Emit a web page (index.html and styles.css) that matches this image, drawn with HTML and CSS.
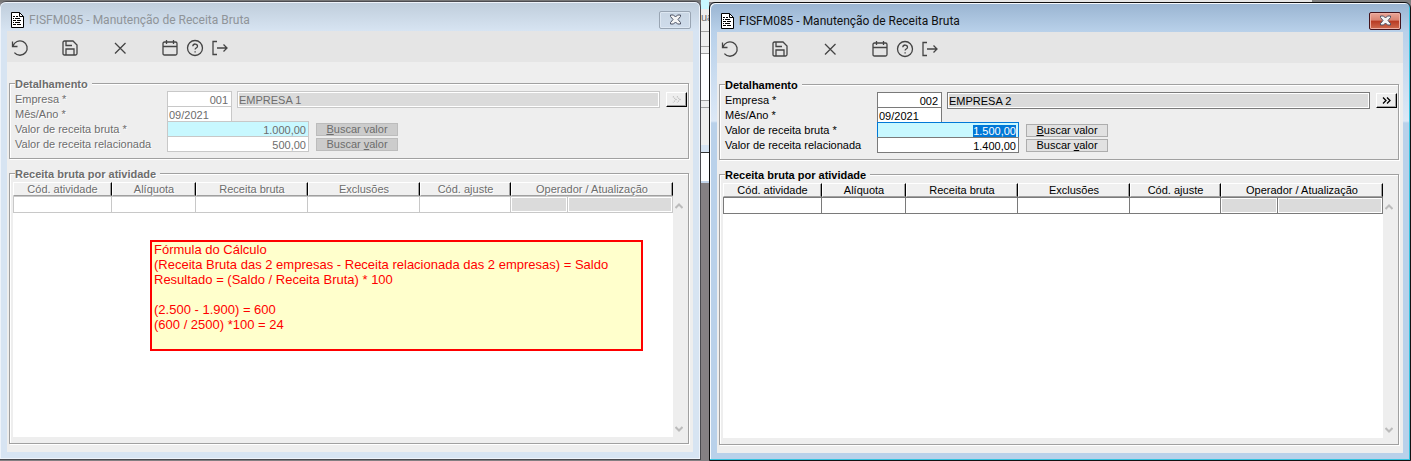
FILE: index.html
```html
<!DOCTYPE html>
<html lang="pt-BR">
<head>
  <meta charset="UTF-8" />
  <meta name="viewport" content="width=device-width, initial-scale=1.0"/>
  <title>FISFM085 - Manutenção de Receita Bruta</title>
  <link rel="stylesheet" href="styles.css">
</head>
<body>

  <svg class="sprite" aria-hidden="true">
    <symbol id="doc" viewBox="0 0 13 16">
      <path d="M0.5 0.5h8l4 4v11h-12z" fill="#fff" stroke="#000"/>
      <path d="M8.5 0.5v4h4" fill="none" stroke="#000"/>
      <path d="M2 4.5h2M5 4.5h2M2 6.5h1M4 6.5h5M2 8.5h3M6 8.5h4M2 10.5h1M4 10.5h5M2 12.5h3M6 12.5h4" stroke="#000"/>
    </symbol>
    <symbol id="undo" viewBox="0 0 18 18">
      <path d="M1.5 2.5v5h5M2 7.2A7.2 7.2 0 1 1 3.4 13.6"/>
    </symbol>
    <symbol id="save" viewBox="0 0 18 18">
      <path d="M3.500 2h8.500l4 4v8.500q0 1.500-1.500 1.500h-11q-1.500 0-1.500-1.500v-11q0-1.500 1.500-1.500zM5 2v4.500h6M5 16v-6h8v6"/>
    </symbol>
    <symbol id="cancel" viewBox="0 0 18 18">
      <path d="M4 4l10.500 10.500M14.500 4l-10.500 10.500"/>
    </symbol>
    <symbol id="calendar" viewBox="0 0 18 18">
      <path d="M3.500 3h11q1.500 0 1.500 1.500v10q0 1.500-1.500 1.500h-11q-1.500 0-1.500-1.500v-10q0-1.500 1.500-1.500zM2 7.500h14M5.500 1v4M12.500 1v4"/>
    </symbol>
    <symbol id="help" viewBox="0 0 18 18">
      <circle cx="9" cy="9" r="7.500"/>
      <path d="M6.800 7.200c.3-3 4.700-2.800 4.700 0 0 1.800-2.400 1.900-2.400 3.300M9.100 12.200v1.200"/>
    </symbol>
    <symbol id="exit" viewBox="0 0 18 18">
      <path d="M6 2.500h-4v13h4M6 9h10M12.500 5.500l3.500 3.500-3.500 3.500"/>
    </symbol>
    <symbol id="close" viewBox="0 0 13 11">
      <path d="M1.500 1h3l2 2 2-2h3v1.500l-2.500 3 2.500 3v1.500h-3l-2-2-2 2h-3v-1.500l2.500-3-2.500-3z" fill="#f4f4f4" stroke="#4c5265"/>
    </symbol>
    <symbol id="more" viewBox="0 0 9 7">
      <path d="M1 0.500l3 3-3 3M5 0.500l3 3-3 3"/>
    </symbol>
    <symbol id="chevron" viewBox="0 0 8 6">
      <path d="M0.500 5l3.500-3.500 3.500 3.500"/>
    </symbol>
  </svg>

  <main class="desktop">

    <section class="window inactive">
      <header class="titlebar">
        <svg class="doc-icon"><use href="#doc"/></svg>
        <h1>FISFM085 - Manutenção de Receita Bruta</h1>
        <button class="close" type="button" aria-label="Fechar"><svg><use href="#close"/></svg></button>
      </header>
      <div class="client">
        <nav class="toolbar">
          <button type="button" aria-label="Desfazer"><svg><use href="#undo"/></svg></button>
          <button class="apart" type="button" aria-label="Salvar"><svg><use href="#save"/></svg></button>
          <button class="apart" type="button" aria-label="Cancelar"><svg><use href="#cancel"/></svg></button>
          <button class="apart" type="button" aria-label="Calendário"><svg><use href="#calendar"/></svg></button>
          <button type="button" aria-label="Ajuda"><svg><use href="#help"/></svg></button>
          <button type="button" aria-label="Sair"><svg><use href="#exit"/></svg></button>
        </nav>
        <form class="content">
          <div class="group">
            <h2>Detalhamento</h2>
            <div class="row">
              <label for="empresa1">Empresa *</label>
              <input class="short number" id="empresa1" value="001">
              <input class="name" aria-label="Nome da empresa" value="EMPRESA 1" readonly>
              <button class="more" type="button" aria-label="Mais"><svg><use href="#more"/></svg></button>
            </div>
            <div class="row">
              <label for="mes1">Mês/Ano *</label>
              <input class="short" id="mes1" value="09/2021">
            </div>
            <div class="row">
              <label for="bruta1">Valor de receita bruta *</label>
              <input class="long number key" id="bruta1" value="1.000,00">
              <button class="fetch" type="button"><u>B</u>uscar valor</button>
            </div>
            <div class="row">
              <label for="rel1">Valor de receita relacionada</label>
              <input class="long number" id="rel1" value="500,00">
              <button class="fetch" type="button">Buscar <u>v</u>alor</button>
            </div>
          </div>
          <div class="group activities">
            <h2>Receita bruta por atividade</h2>
            <div class="list">
              <div class="sheet">
                <table>
                  <colgroup>
                    <col class="c-code"><col class="c-rate"><col class="c-value"><col class="c-value"><col class="c-adjust"><col class="c-user"><col>
                  </colgroup>
                  <thead>
                    <tr><th>Cód. atividade</th><th>Alíquota</th><th>Receita bruta</th><th>Exclusões</th><th>Cód. ajuste</th><th colspan="2">Operador / Atualização</th></tr>
                  </thead>
                  <tbody>
                    <tr><td></td><td></td><td></td><td></td><td></td><td class="locked"></td><td class="locked"></td></tr>
                  </tbody>
                </table>
              </div>
              <div class="scroll">
                <svg><use href="#chevron"/></svg>
                <svg class="down"><use href="#chevron"/></svg>
              </div>
            </div>
            <div class="note">
              <p>Fórmula do Cálculo</p>
              <p>(Receita Bruta das 2 empresas - Receita relacionada das 2 empresas) = Saldo</p>
              <p>Resultado = (Saldo / Receita Bruta) * 100</p>
              <br>
              <p>(2.500 - 1.900) = 600</p>
              <p>(600 / 2500) *100 = 24</p>
            </div>
          </div>
        </form>
      </div>
    </section>

    <div class="behind">
      <div class="b-key"></div>
      <div class="b-text">ua</div>
      <div class="b-row"></div>
      <div class="b-gap"></div>
      <div class="b-sheet"></div>
      <div class="b-gap"></div>
      <div class="b-foot"></div>
      <div class="b-frame"></div>
      <div class="b-last"></div>
    </div>

    <section class="window active">
      <header class="titlebar">
        <svg class="doc-icon"><use href="#doc"/></svg>
        <h1>FISFM085 - Manutenção de Receita Bruta</h1>
        <button class="close" type="button" aria-label="Fechar"><svg><use href="#close"/></svg></button>
      </header>
      <div class="client">
        <nav class="toolbar">
          <button type="button" aria-label="Desfazer"><svg><use href="#undo"/></svg></button>
          <button class="apart" type="button" aria-label="Salvar"><svg><use href="#save"/></svg></button>
          <button class="apart" type="button" aria-label="Cancelar"><svg><use href="#cancel"/></svg></button>
          <button class="apart" type="button" aria-label="Calendário"><svg><use href="#calendar"/></svg></button>
          <button type="button" aria-label="Ajuda"><svg><use href="#help"/></svg></button>
          <button type="button" aria-label="Sair"><svg><use href="#exit"/></svg></button>
        </nav>
        <form class="content">
          <div class="group">
            <h2>Detalhamento</h2>
            <div class="row">
              <label for="empresa2">Empresa *</label>
              <input class="short number" id="empresa2" value="002">
              <input class="name" aria-label="Nome da empresa" value="EMPRESA 2" readonly>
              <button class="more" type="button" aria-label="Mais"><svg><use href="#more"/></svg></button>
            </div>
            <div class="row">
              <label for="mes2">Mês/Ano *</label>
              <input class="short" id="mes2" value="09/2021">
            </div>
            <div class="row">
              <label for="bruta2">Valor de receita bruta *</label>
              <input class="long number key" id="bruta2" value="1.500,00">
              <button class="fetch" type="button"><u>B</u>uscar valor</button>
            </div>
            <div class="row">
              <label for="rel2">Valor de receita relacionada</label>
              <input class="long number" id="rel2" value="1.400,00">
              <button class="fetch" type="button">Buscar <u>v</u>alor</button>
            </div>
          </div>
          <div class="group activities">
            <h2>Receita bruta por atividade</h2>
            <div class="list">
              <div class="sheet">
                <table>
                  <colgroup>
                    <col class="c-code"><col class="c-rate"><col class="c-value"><col class="c-value"><col class="c-adjust"><col class="c-user"><col>
                  </colgroup>
                  <thead>
                    <tr><th>Cód. atividade</th><th>Alíquota</th><th>Receita bruta</th><th>Exclusões</th><th>Cód. ajuste</th><th colspan="2">Operador / Atualização</th></tr>
                  </thead>
                  <tbody>
                    <tr><td></td><td></td><td></td><td></td><td></td><td class="locked"></td><td class="locked"></td></tr>
                  </tbody>
                </table>
              </div>
              <div class="scroll">
                <svg><use href="#chevron"/></svg>
                <svg class="down"><use href="#chevron"/></svg>
              </div>
            </div>
          </div>
        </form>
      </div>
    </section>

  </main>

  <script>
    const field = document.getElementById('bruta2');
    field.focus();
    field.select();
  </script>

</body>
</html>
```
FILE: styles.css
```css
* { box-sizing: border-box; margin: 0; padding: 0; }
body, input, button {
  font-family: "Liberation Sans", Arial, sans-serif;
  font-size: 11px;
}
.sprite { position: absolute; width: 0; height: 0; }
.desktop {
  display: grid;
  grid-template-columns: minmax(0, 701fr) 8px minmax(0, 702fr);
  min-height: 100vh;
  background:
    linear-gradient(90deg, #777 50%, #e6e6e6 0 93%, #808080 0) top / 100% 2px no-repeat,
    #848083;
}

/* windows */
.window {
  --frame: #d7e4f2;
  --bar: linear-gradient(#bfcddb, #d7e4f2);
  --text: #6d6d6d;
  --line: #c8c8c8;
  --fetch: #ccc;
  --fetch-line: #bcbcbc;
  display: flex;
  flex-direction: column;
  padding: 0 7px 7px;
  background: var(--bar) top / 100% 29px no-repeat, var(--frame);
  border: 1px solid #4b4b50;
  border-radius: 6px 6px 0 0;
  box-shadow: inset 0 0 0 1px #eef3fa;
  color: var(--text);
}
.inactive {
  margin: 1px 0;
  border-left: 0;
  text-shadow: 1px 1px 0 #fff;
}
.active {
  --frame: #b9d1ea;
  --bar: linear-gradient(#99b4d1, #b9d1ea);
  --text: #000;
  --line: #7a7a7a;
  --fetch: #e1e1e1;
  --fetch-line: #adadad;
  margin-top: 2px;
  background:
    var(--bar) top / 100% 29px no-repeat,
    linear-gradient(#b9d1ea 30px, #dce8f6 118px, #b9d1ea 120px);
  border-color: #111;
  box-shadow: inset -1px -1px 0 #35c3df, inset 1px 1px 0 #f5f9fd;
}
.titlebar {
  display: flex;
  align-items: center;
  height: 29px;
  padding: 6px 2px 0 4px;
}
.titlebar h1 {
  flex: 1;
  margin-left: 5px;
  font: 12px/16px Roboto, "Noto Sans", sans-serif;
  color: #111;
  text-shadow: none;
}
.inactive .titlebar h1 { color: #8f9499; }
.doc-icon { width: 13px; height: 16px; }
.close {
  display: grid;
  place-items: center;
  width: 32px;
  height: 18px;
  border: 1px solid #99a5b3;
  border-radius: 2px;
  background: linear-gradient(#c9d6e4, #cfdceb);
  box-shadow: inset 0 0 0 1px #dde7f2;
}
.close svg { width: 13px; height: 11px; }
.active .close {
  border-color: #43141c;
  background: linear-gradient(#e9a698, #d98472 45%, #b83a22 50%, #cf6c50);
  box-shadow: inset 0 0 0 1px #eeb0a4;
}
.client {
  flex: 1;
  display: flex;
  flex-direction: column;
  background: #eee;
}
.toolbar {
  display: flex;
  height: 31px;
  padding-top: 3px;
  background: #e5e5e5;
}
.toolbar button {
  display: grid;
  place-items: center;
  width: 25px;
  height: 28px;
  border: 0;
  background: none;
}
.toolbar .apart { margin-left: 25px; }
.toolbar svg { width: 18px; height: 18px; }
.toolbar svg, .more svg, .scroll svg { fill: none; stroke: #444; stroke-width: 1.3; }

/* form */
.content {
  flex: 1;
  display: flex;
  flex-direction: column;
  gap: 14px;
  padding: 21px 4px 8px 2px;
}
.group {
  position: relative;
  padding: 0 1px 7px 5px;
  border: 1px solid #a0a0a0;
  box-shadow: 1px 1px 0 #fff, inset 1px 1px 0 #fff;
}
.group h2 {
  width: max-content;
  height: 14px;
  margin-top: -7px;
  padding-right: 4px;
  background: #eee;
  font-size: 11px;
  line-height: 14px;
}
.row { display: flex; height: 15px; }
.row label { width: 152px; line-height: 17px; }
.row input {
  height: 16px;
  padding: 1px 2px 0;
  border: 1px solid var(--line);
  border-radius: 0;
  outline: 0;
  background: #fff;
  color: var(--text);
}
.row .short { width: 65px; padding-left: 1px; }
.row .long { width: 142px; }
.row .number { text-align: right; }
.row .key { background: #c8f8ff; }
.row .key:focus { border-color: #0078d7; }
.row .key::selection { background: #0078d7; color: #fff; }
.row .name {
  flex: 1;
  height: 17px;
  margin: 0 6px 0 5px;
  padding: 0 1px;
  background: #dbdbdb;
  box-shadow: inset 0 0 0 1px #fff;
}
.row .short.number { padding-right: 3px; }
.more {
  display: grid;
  place-items: center;
  width: 21px;
  height: 15px;
  margin-top: 1px;
  border: 1px solid;
  border-color: #fff #000 #000 #fff;
  background: #eee;
  box-shadow: inset -1px -1px 0 #a0a0a0;
}
.more svg { width: 9px; height: 7px; stroke: #000; }
.inactive .more svg { stroke: #bbb; stroke-dasharray: 1 1; }
.fetch {
  width: 82px;
  height: 13px;
  margin: 2px 0 0 7px;
  border: 1px solid var(--fetch-line);
  background: var(--fetch);
  color: var(--text);
  line-height: 11px;
}
.inactive .fetch, .inactive .row input { text-shadow: none; }

/* activity list */
.activities {
  flex: 1;
  display: flex;
  flex-direction: column;
  padding: 0 4px 6px 5px;
}
.list { flex: 1; display: flex; margin: 1px 0 0 -2px; }
.sheet { flex: 1; background: #fff; }
table {
  width: 100%;
  table-layout: fixed;
  border-collapse: separate;
  border-spacing: 0;
}
.c-code { width: 99px; }
.c-rate { width: 84px; }
.c-value { width: 112px; }
.c-adjust { width: 91px; }
.c-user { width: 57px; }
th {
  height: 14px;
  border: 1px solid;
  border-color: #fff #000 #a0a0a0 #fff;
  background: #f0f0f0;
  box-shadow: inset -1px 0 0 #a0a0a0;
  font-weight: normal;
  line-height: 12px;
  white-space: nowrap;
}
td {
  height: 17px;
  border: 1px solid var(--line);
  border-left: 0;
}
td:first-child { border-left: 1px solid var(--line); }
.locked { background: #dbdbdb; box-shadow: inset 0 0 0 1px #fff; }
.scroll {
  display: flex;
  flex-direction: column;
  justify-content: space-between;
  align-items: center;
  width: 11px;
  padding: 21px 0 5px;
  background: #eee;
}
.scroll svg { width: 8px; height: 6px; stroke: #bbb; stroke-width: 2; }
.scroll .down { transform: rotate(180deg); }

/* comment box laid over the list */
.note {
  position: absolute;
  left: 140px;
  top: 66px;
  width: 493px;
  height: 111px;
  padding: 0 2px;
  border: 2px solid #f00;
  background: #ffc;
  color: #f00;
  font-size: 13px;
  line-height: 15px;
  text-shadow: none;
  white-space: nowrap;
}

/* strip of the window that shows between the two */
.behind {
  overflow: hidden;
  color: #6d6d6d;
  background: linear-gradient(#eee, #eee) top / 100% 183px no-repeat;
}
.behind div { border-bottom: 1px solid #a0a0a0; }
.behind .b-key { height: 9px; background: #c8f8ff; border: 0; }
.behind .b-text { height: 23px; line-height: 17px; }
.behind .b-row { height: 15px; }
.behind .b-gap { height: 7px; }
.behind .b-sheet { height: 47px; background: #fff; }
.behind .b-foot { height: 37px; border: 0; }
.behind .b-frame { height: 8px; background: #d7e4f2; border-color: #333; }
.behind .b-last { height: 30px; background: #fff; border-bottom: 2px solid #c4d6ec; }
```
